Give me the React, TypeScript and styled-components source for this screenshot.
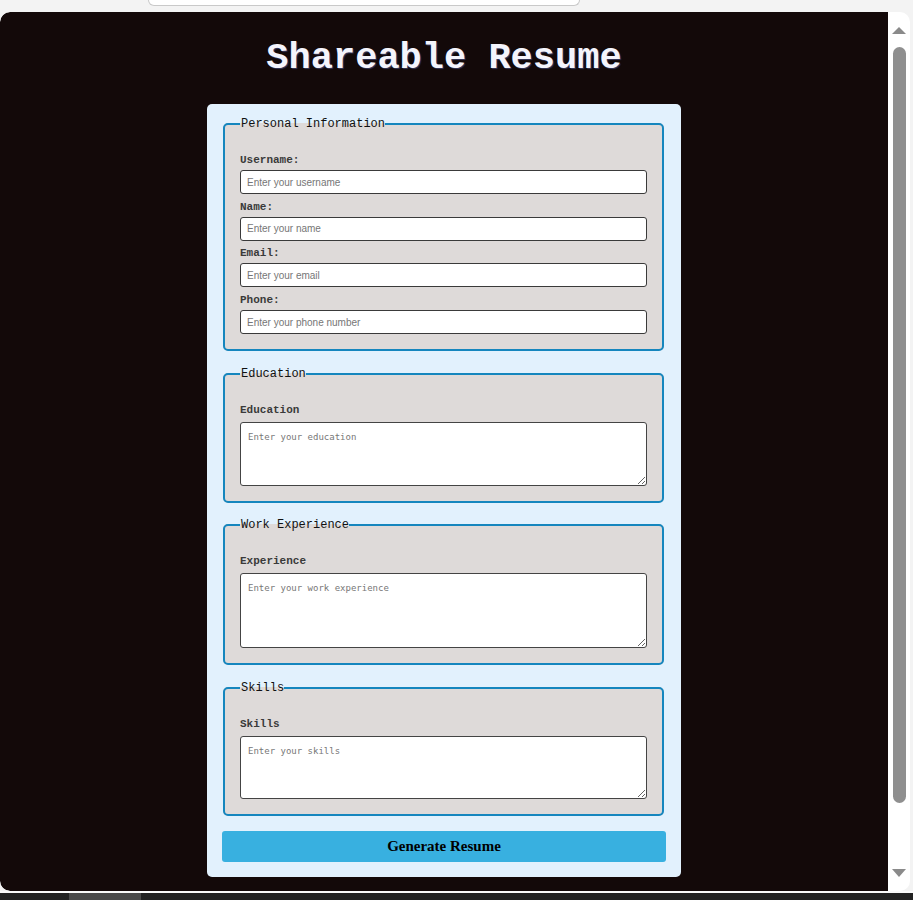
import React from "react";
import styled, { createGlobalStyle } from "styled-components";

const Global = createGlobalStyle`
  html, body { margin: 0; padding: 0; background: #f3f3f3; }
  * { box-sizing: border-box; }
`;

const Screen = styled.div`
  width: 913px;
  height: 900px;
  display: flex;
  flex-direction: column;
  background: #f3f3f3;
  overflow: hidden;
`;

const TopBar = styled.div`
  height: 12px;
  display: flex;
  align-items: flex-start;
`;

const AddressPill = styled.div`
  margin-left: 148px;
  width: 432px;
  height: 6px;
  background: #ffffff;
  border: 1px solid #c9c9c9;
  border-top: none;
  border-radius: 0 0 14px 14px;
`;

const Viewport = styled.div`
  height: 879px;
  margin-right: 3px;
  display: flex;
  background: #ffffff;
  border-radius: 10px;
  overflow: hidden;
`;

const Page = styled.main`
  flex: 1;
  background: #130909;
  border-radius: 10px 0 0 10px;
  display: flex;
  flex-direction: column;
  align-items: center;
`;

const Title = styled.h1`
  margin: 0;
  height: 92px;
  display: flex;
  align-items: center;
  justify-content: center;
  font-family: "Liberation Mono", "Courier New", monospace;
  font-weight: bold;
  font-size: 37px;
  line-height: 1;
  color: #f4f4fc;
  text-shadow: 1px 1px 1px rgba(110, 130, 220, 0.4);
`;

const Card = styled.form`
  width: 474px;
  padding: 13px 15px 15px;
  background: #e2f1fd;
  border-radius: 5px;
`;

const Section = styled.fieldset<{ $padBottom?: number }>`
  margin: 0 2px 15.5px 1px;
  padding: 23px 15px ${(p) => p.$padBottom ?? 14}px;
  border: 2px solid #1586be;
  border-radius: 5px;
  background: #dedad9;
  min-width: 0;
`;

const Legend = styled.legend`
  padding: 0 0 0 1px;
  margin-left: 0;
  font-family: "Liberation Mono", "Courier New", monospace;
  font-size: 12px;
  line-height: 14px;
  color: #111;
`;

const Field = styled.div`
  margin-bottom: 6.7px;
  &:last-child { margin-bottom: 0; }
`;

const Label = styled.label`
  display: block;
  margin-bottom: 3px;
  font-family: "Liberation Mono", "Courier New", monospace;
  font-weight: bold;
  font-size: 11px;
  line-height: 13px;
  color: #3a3a3a;
`;

const TextInput = styled.input`
  display: block;
  width: 100%;
  height: 24px;
  padding: 0 6px;
  border: 1px solid #3a3a3a;
  border-radius: 3px;
  background: #fff;
  font-family: "Liberation Sans", Arial, sans-serif;
  font-size: 10px;
  outline: none;
  &::placeholder { color: #767676; }
`;

const TextArea = styled.textarea<{ $h: number }>`
  display: block;
  width: 100%;
  height: ${(p) => p.$h}px;
  margin: 5px 0 1px;
  padding: 9px 7px;
  border: 1px solid #444;
  border-radius: 3px;
  background: #fff;
  font-family: "DejaVu Sans Mono", monospace;
  font-size: 9px;
  resize: vertical;
  outline: none;
  &::placeholder { color: #777; }
`;

const SubmitButton = styled.button`
  display: block;
  width: 100%;
  height: 31px;
  margin-top: 1px;
  border: none;
  border-radius: 3px;
  background: #38b0e0;
  font-family: "Liberation Serif", "Times New Roman", serif;
  font-weight: bold;
  font-size: 15px;
  color: #000;
  cursor: pointer;
`;

const Scrollbar = styled.div`
  width: 22px;
  display: flex;
  flex-direction: column;
  align-items: center;
  padding: 15px 0 14px;
`;

const Arrow = styled.div<{ $down?: boolean }>`
  width: 0;
  height: 0;
  border-left: 7.5px solid transparent;
  border-right: 7.5px solid transparent;
  ${(p) =>
    p.$down
      ? "border-top: 8px solid #8a8a8a;"
      : "border-bottom: 7px solid #8a8a8a;"}
`;

const Thumb = styled.div`
  width: 13px;
  height: 756px;
  margin-top: 13px;
  border-radius: 7px;
  background: #8f8f8f;
`;

const Spacer = styled.div`
  flex: 1;
`;

const BottomBar = styled.div`
  flex: 1;
  border-top: 2px solid #fafafa;
  background: #222;
  display: flex;
`;

const TaskItem = styled.div`
  margin-left: 69px;
  width: 72px;
  background: #4a4a4a;
`;

const personal = [
  { id: "username", label: "Username:", ph: "Enter your username", type: "text" },
  { id: "name", label: "Name:", ph: "Enter your name", type: "text" },
  { id: "email", label: "Email:", ph: "Enter your email", type: "email" },
  { id: "phone", label: "Phone:", ph: "Enter your phone number", type: "tel" },
];

const areas = [
  { legend: "Education", label: "Education", ph: "Enter your education", h: 64 },
  { legend: "Work Experience", label: "Experience", ph: "Enter your work experience", h: 75 },
  { legend: "Skills", label: "Skills", ph: "Enter your skills", h: 63 },
];

export default function App() {
  return (
    <>
      <Global />
      <Screen>
        <TopBar>
          <AddressPill />
        </TopBar>
        <Viewport>
          <Page>
            <Title>Shareable Resume</Title>
            <Card onSubmit={(e) => e.preventDefault()}>
              <Section $padBottom={15}>
                <Legend>Personal Information</Legend>
                {personal.map((f) => (
                  <Field key={f.id}>
                    <Label htmlFor={f.id}>{f.label}</Label>
                    <TextInput id={f.id} type={f.type} placeholder={f.ph} />
                  </Field>
                ))}
              </Section>
              {areas.map((a) => (
                <Section key={a.legend}>
                  <Legend>{a.legend}</Legend>
                  <Field>
                    <Label htmlFor={a.label}>{a.label}</Label>
                    <TextArea id={a.label} $h={a.h} placeholder={a.ph} />
                  </Field>
                </Section>
              ))}
              <SubmitButton type="submit">Generate Resume</SubmitButton>
            </Card>
          </Page>
          <Scrollbar>
            <Arrow />
            <Thumb />
            <Spacer />
            <Arrow $down />
          </Scrollbar>
        </Viewport>
        <BottomBar>
          <TaskItem />
        </BottomBar>
      </Screen>
    </>
  );
}
